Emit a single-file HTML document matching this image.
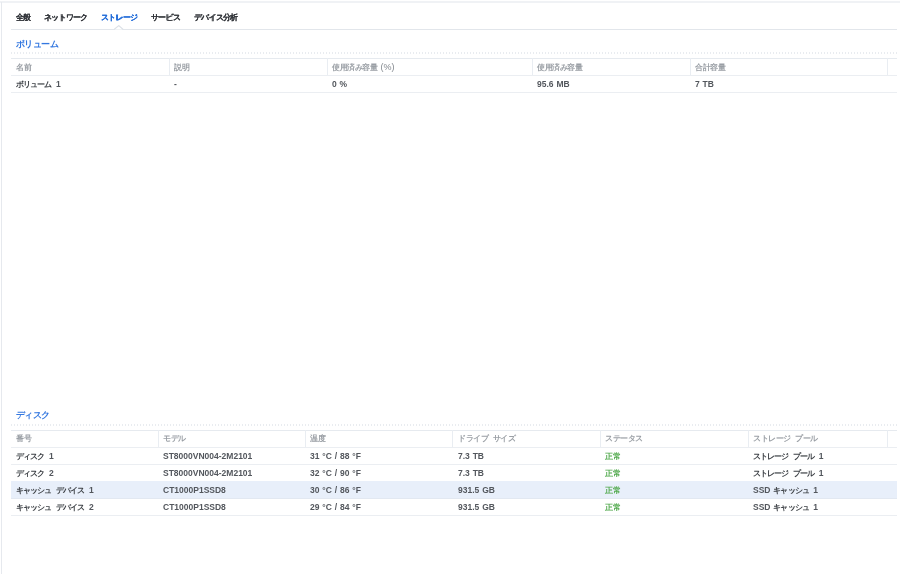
<!DOCTYPE html>
<html lang="ja">
<head>
<meta charset="utf-8">
<style>
html,body{margin:0;padding:0;background:#fff;width:900px;height:574px;overflow:hidden;}
body{font-family:"Liberation Sans",sans-serif;color:#333;position:relative;}
.topb{position:absolute;left:0;top:1px;width:900px;height:2px;background:#f0f2f5;}
.leftb{position:absolute;left:1px;top:2px;width:1px;height:572px;background:#e6e9ee;}
.tabs{position:absolute;left:0;top:0;width:900px;}
.tab{position:absolute;top:12px;font-size:8px;letter-spacing:-0.8px;font-weight:bold;color:#34373c;text-shadow:0.25px 0 0 currentColor;white-space:nowrap;line-height:12px;}
.tab.act{color:#1f6ad8;}
.tabline{position:absolute;left:11px;top:29px;width:886px;height:1px;background:#e2e6eb;}
.notch{position:absolute;left:114px;top:25px;width:10px;height:6px;}
.sect{position:absolute;left:16px;font-size:9.4px;letter-spacing:-0.6px;font-weight:bold;color:#3478e0;white-space:nowrap;line-height:12px;}
.dots{position:absolute;left:11px;width:886px;height:2px;background-image:linear-gradient(to right,#e9ecf0 50%,transparent 50%);background-size:3px 2px;}
.hline{position:absolute;left:11px;width:886px;height:1px;background:#ebeef2;}
.hline.thick{background:#e6eaef;}
.vsep{position:absolute;width:1px;background:#e9edf2;}
.th{position:absolute;font-size:9px;color:#83888e;word-spacing:1px;white-space:nowrap;line-height:12px;}
.td{position:absolute;font-size:8.5px;font-weight:bold;color:#53575d;white-space:nowrap;line-height:12px;}
.ok{color:#3b9d3b;}
.th .j{font-size:7.8px;letter-spacing:-0.5px;font-weight:bold;color:#9a9fa5;}
.sp{display:inline-block;width:4.5px;}
.td{word-spacing:0.5px;}
.td .j{font-size:8.4px;letter-spacing:-0.9px;font-weight:bold;color:#3e4247;}
.td.ok .j{color:#52aa4e;font-size:7.8px;letter-spacing:-0.1px;}
.wrap{position:absolute;left:0;top:0;width:900px;height:574px;will-change:transform;}
.hl{position:absolute;left:11px;width:886px;background:#e8effa;}
</style>
</head>
<body>
<div class="wrap">
<div class="topb"></div>
<div class="leftb"></div>

<div class="tab" style="left:16px">全般</div>
<div class="tab" style="left:44px">ネットワーク</div>
<div class="tab act" style="left:101px">ストレージ</div>
<div class="tab" style="left:151px">サービス</div>
<div class="tab" style="left:194px">デバイス分析</div>
<div class="tabline"></div>
<svg class="notch" viewBox="0 0 10 6" width="10" height="6"><path d="M0 4.5 L4.8 0.6 L9.2 4.5" fill="#fff" stroke="#dce1e7" stroke-width="1.1"/></svg>

<!-- Volume section -->
<div class="sect" style="top:38px">ボリューム</div>
<div class="dots" style="top:52px"></div>
<div class="hline thick" style="top:58px"></div>
<div class="hline" style="top:75px"></div>
<div class="hline" style="top:92px"></div>
<div class="vsep" style="left:169px;top:58px;height:17px"></div>
<div class="vsep" style="left:327px;top:58px;height:17px"></div>
<div class="vsep" style="left:532px;top:58px;height:17px"></div>
<div class="vsep" style="left:690px;top:58px;height:17px"></div>
<div class="vsep" style="left:887px;top:58px;height:17px"></div>

<div class="th" style="left:16px;top:61px"><span class="j">名前</span></div>
<div class="th" style="left:174px;top:61px"><span class="j">説明</span></div>
<div class="th" style="left:332px;top:61px"><span class="j">使用済み容量</span> (%)</div>
<div class="th" style="left:537px;top:61px"><span class="j">使用済み容量</span></div>
<div class="th" style="left:695px;top:61px"><span class="j">合計容量</span></div>

<div class="td" style="left:16px;top:78px"><span class="j">ボリューム</span><i class="sp"></i>1</div>
<div class="td" style="left:174px;top:78px">-</div>
<div class="td" style="left:332px;top:78px">0 %</div>
<div class="td" style="left:537px;top:78px">95.6 MB</div>
<div class="td" style="left:695px;top:78px">7 TB</div>

<!-- Disk section -->
<div class="sect" style="top:409px">ディスク</div>
<div class="dots" style="top:424px"></div>
<div class="hline thick" style="top:430px"></div>
<div class="hline" style="top:447px"></div>
<div class="hline" style="top:464px"></div>
<div class="hl" style="top:481px;height:18px"></div><div class="hline" style="top:498px;background:#e2e8f1"></div>
<div class="hline" style="top:515px"></div>
<div class="vsep" style="left:158px;top:430px;height:17px"></div>
<div class="vsep" style="left:305px;top:430px;height:17px"></div>
<div class="vsep" style="left:452px;top:430px;height:17px"></div>
<div class="vsep" style="left:600px;top:430px;height:17px"></div>
<div class="vsep" style="left:748px;top:430px;height:17px"></div>
<div class="vsep" style="left:887px;top:430px;height:17px"></div>

<div class="th" style="left:16px;top:432px"><span class="j">番号</span></div>
<div class="th" style="left:163px;top:432px"><span class="j">モデル</span></div>
<div class="th" style="left:310px;top:432px"><span class="j">温度</span></div>
<div class="th" style="left:458px;top:432px"><span class="j">ドライブ</span><i class="sp"></i><span class="j">サイズ</span></div>
<div class="th" style="left:605px;top:432px"><span class="j">ステータス</span></div>
<div class="th" style="left:753px;top:432px"><span class="j">ストレージ</span><i class="sp"></i><span class="j">プール</span></div>

<div class="td" style="left:16px;top:450px"><span class="j">ディスク</span><i class="sp"></i>1</div>
<div class="td" style="left:163px;top:450px">ST8000VN004-2M2101</div>
<div class="td" style="left:310px;top:450px">31 °C / 88 °F</div>
<div class="td" style="left:458px;top:450px">7.3 TB</div>
<div class="td ok" style="left:605px;top:450px"><span class="j">正常</span></div>
<div class="td" style="left:753px;top:450px"><span class="j">ストレージ</span><i class="sp"></i><span class="j">プール</span><i class="sp"></i>1</div>

<div class="td" style="left:16px;top:467px"><span class="j">ディスク</span><i class="sp"></i>2</div>
<div class="td" style="left:163px;top:467px">ST8000VN004-2M2101</div>
<div class="td" style="left:310px;top:467px">32 °C / 90 °F</div>
<div class="td" style="left:458px;top:467px">7.3 TB</div>
<div class="td ok" style="left:605px;top:467px"><span class="j">正常</span></div>
<div class="td" style="left:753px;top:467px"><span class="j">ストレージ</span><i class="sp"></i><span class="j">プール</span><i class="sp"></i>1</div>

<div class="td" style="left:16px;top:484px"><span class="j">キャッシュ</span><i class="sp"></i><span class="j">デバイス</span><i class="sp"></i>1</div>
<div class="td" style="left:163px;top:484px">CT1000P1SSD8</div>
<div class="td" style="left:310px;top:484px">30 °C / 86 °F</div>
<div class="td" style="left:458px;top:484px">931.5 GB</div>
<div class="td ok" style="left:605px;top:484px"><span class="j">正常</span></div>
<div class="td" style="left:753px;top:484px">SSD <span class="j">キャッシュ</span><i class="sp"></i>1</div>

<div class="td" style="left:16px;top:501px"><span class="j">キャッシュ</span><i class="sp"></i><span class="j">デバイス</span><i class="sp"></i>2</div>
<div class="td" style="left:163px;top:501px">CT1000P1SSD8</div>
<div class="td" style="left:310px;top:501px">29 °C / 84 °F</div>
<div class="td" style="left:458px;top:501px">931.5 GB</div>
<div class="td ok" style="left:605px;top:501px"><span class="j">正常</span></div>
<div class="td" style="left:753px;top:501px">SSD <span class="j">キャッシュ</span><i class="sp"></i>1</div>

</div>
</body>
</html>
